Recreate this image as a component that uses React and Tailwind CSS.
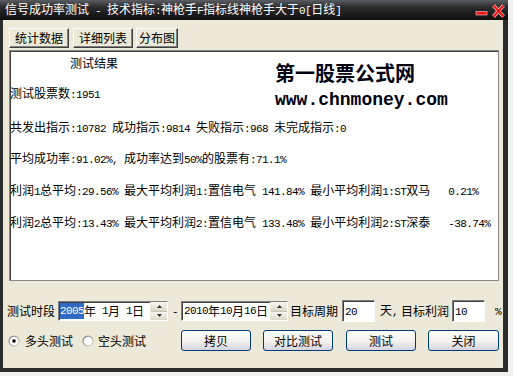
import React from "react";

function T({ s }) {
  const parts = s.match(/[\x00-\xff]+|[^\x00-\xff]+/g) || [];
  return (
    <>
      {parts.map((p, i) =>
        p.charCodeAt(0) <= 0xff ? (
          <span key={i} className="font-['Liberation_Mono',monospace] text-[11px] tracking-[-0.6px]">
            {p}
          </span>
        ) : (
          <span key={i}>{p}</span>
        )
      )}
    </>
  );
}

function Tab({ label, w }) {
  return (
    <div
      className={`${w} h-[20px] flex items-center justify-center bg-[#ece9d8] border border-t-white border-l-white border-r-[#404040] border-b-[#404040] shadow-[inset_-1px_-1px_0_#808080]`}
    >
      {label}
    </div>
  );
}

function Spinner() {
  return (
    <div className="ml-auto w-[17px] h-full flex flex-col border-l border-[#ece9d8]">
      <div className="flex-1 flex items-center justify-center bg-[linear-gradient(#f7f6f0,#dcd9cb)] border-b border-[#c8c5b5]">
        <svg width="5" height="3" viewBox="0 0 5 3">
          <path d="M2.5 0 L5 3 L0 3 Z" fill="#333" />
        </svg>
      </div>
      <div className="flex-1 flex items-center justify-center bg-[linear-gradient(#f7f6f0,#dcd9cb)]">
        <svg width="5" height="3" viewBox="0 0 5 3">
          <path d="M0 0 L5 0 L2.5 3 Z" fill="#333" />
        </svg>
      </div>
    </div>
  );
}

const sunken =
  "bg-white border border-t-[#808080] border-l-[#808080] border-r-white border-b-white shadow-[inset_1px_1px_0_#404040]";

function Radio({ checked }) {
  return (
    <svg width="12" height="12" viewBox="0 0 12 12">
      <defs>
        <linearGradient id={checked ? "rg1" : "rg2"} x1="0" y1="0" x2="1" y2="1">
          <stop offset="0" stopColor="#6f6f6f" />
          <stop offset="1" stopColor="#e8e8e8" />
        </linearGradient>
      </defs>
      <circle cx="6" cy="6" r="5.5" fill={`url(#${checked ? "rg1" : "rg2"})`} />
      <circle cx="6" cy="6" r="4.3" fill="#fff" />
      {checked && <circle cx="6" cy="6" r="1.8" fill="#000" />}
    </svg>
  );
}

function Btn({ label, w, ml }) {
  return (
    <div
      className={`${w} ${ml} h-[21px] flex items-center justify-center rounded-[3px] border border-[#003c74] bg-[linear-gradient(180deg,#ffffff_0%,#f2f1ec_55%,#d6d5e2_100%)]`}
    >
      {label}
    </div>
  );
}

export default function App() {
  return (
    <div className="w-[513px] h-[376px] bg-[#f1f1ee] overflow-hidden font-['Noto_Sans_CJK_SC',sans-serif] text-[12px] leading-[16px] text-black">
      <div className="w-[508px] h-[372px] flex flex-col">
        {/* title bar */}
        <div className="h-[20px] flex items-center bg-[linear-gradient(#5a5d63,#2c2c2c_35%,#0e0e0e)] text-white pl-[5px] whitespace-pre">
          <div className="flex-1">
            <T s="信号成功率测试 - 技术指标:神枪手F指标线神枪手大于0[日线]" />
          </div>
          <svg width="34" height="20" viewBox="0 0 34 20" className="mr-[3px]">
            <rect x="5" y="11.5" width="11" height="3.5" fill="#f01818" stroke="#ffd0d0" strokeWidth="0.6" />
            <path d="M22.5 5.5 L32.5 16.5 M32.5 5.5 L22.5 16.5" stroke="#ffd0d0" strokeWidth="3.6" />
            <path d="M22.5 5.5 L32.5 16.5 M32.5 5.5 L22.5 16.5" stroke="#f01818" strokeWidth="2.4" />
          </svg>
        </div>

        {/* body */}
        <div className="flex-1 flex flex-col bg-[#ece9d8] border-l-[3px] border-r-[5px] border-b-[4px] border-[#2d2d2d]">
          {/* tabs */}
          <div className="flex mt-[8px] ml-[6px]">
            <Tab label="统计数据" w="w-[60px]" />
            <div className="w-[4px]" />
            <Tab label="详细列表" w="w-[60px]" />
            <div className="w-[3px]" />
            <Tab label="分布图" w="w-[42px]" />
          </div>

          {/* panel */}
          <div className="mt-[2px] ml-[6px] w-[490px] h-[231px] bg-white border border-[#8a8a8a] shadow-[inset_1px_1px_0_#404040] pt-[4px] whitespace-pre">
            <div className="flex">
              <div className="w-[265px]">
                <div className="h-[16px] pl-[60px]">测试结果</div>
                <div className="h-[16px] mt-[14px]">
                  <T s="测试股票数:1951" />
                </div>
              </div>
              <div className="h-[46px] pt-[6px]">
                <div className="h-[24px] leading-[24px] text-[20px] font-bold text-[#000010]">第一股票公式网</div>
                <div className="h-[20px] leading-[20px] mt-[5px] text-[18px] font-bold font-['Liberation_Mono',monospace] text-[#000010]">
                  www.chnmoney.com
                </div>
              </div>
            </div>
            <div className="h-[16px] mt-[18px]">
              <T s="共发出指示:10782 成功指示:9814 失败指示:968 未完成指示:0" />
            </div>
            <div className="h-[16px] mt-[15px]">
              <T s="平均成功率:91.02%, 成功率达到50%的股票有:71.1%" />
            </div>
            <div className="h-[16px] mt-[16px]">
              <T s="利润1总平均:29.56% 最大平均利润1:置信电气 141.84% 最小平均利润1:ST双马   0.21%" />
            </div>
            <div className="h-[16px] mt-[16px]">
              <T s="利润2总平均:13.43% 最大平均利润2:置信电气 133.48% 最小平均利润2:ST深泰   -38.74%" />
            </div>
          </div>

          {/* row 1 */}
          <div className="mt-[19px] h-[22px] flex items-center whitespace-pre">
            <div className="ml-[4px]">测试时段</div>
            <div className={`ml-[3px] w-[110px] h-[20px] flex items-center pl-[1px] ${sunken}`}>
              <span className="bg-[#316ac5] text-white h-[16px] flex items-center">
                <T s="2005" />
              </span>
              <T s="年 1月 1日" />
              <Spinner />
            </div>
            <div className="ml-[4px] w-[6px]">
              <T s="-" />
            </div>
            <div className={`ml-[3px] w-[107px] h-[20px] flex items-center pl-[2px] ${sunken}`}>
              <T s="2010年10月16日" />
              <Spinner />
            </div>
            <div className="ml-[2px]">目标周期</div>
            <div className={`ml-[4px] w-[33px] h-[22px] pl-[2px] pt-[1px] ${sunken}`}>
              <T s="20" />
            </div>
            <div className="ml-[5px]">
              <T s="天," />
            </div>
            <div className="ml-[3px]">目标利润</div>
            <div className={`ml-[3px] w-[33px] h-[22px] pl-[2px] pt-[1px] ${sunken}`}>
              <T s="10" />
            </div>
            <div className="ml-[10px]">
              <T s="%" />
            </div>
          </div>

          {/* row 2 */}
          <div className="mt-[8px] h-[21px] flex items-center">
            <div className="ml-[5px] flex items-center">
              <Radio checked />
            </div>
            <div className="ml-[5px]">多头测试</div>
            <div className="ml-[9px] flex items-center">
              <Radio />
            </div>
            <div className="ml-[4px]">空头测试</div>
            <Btn label="拷贝" w="w-[70px]" ml="ml-[35px]" />
            <Btn label="对比测试" w="w-[70px]" ml="ml-[12px]" />
            <Btn label="测试" w="w-[70px]" ml="ml-[13px]" />
            <Btn label="关闭" w="w-[71px]" ml="ml-[12px]" />
          </div>
        </div>
      </div>
    </div>
  );
}
